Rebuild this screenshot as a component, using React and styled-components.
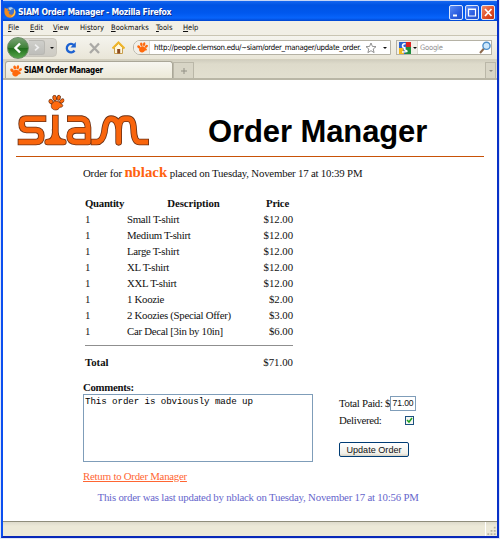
import React from "react";
import styled, { createGlobalStyle } from "styled-components";

const Global = createGlobalStyle`
  * { box-sizing: border-box; }
  body { margin: 0; background: #dfe6f8; overflow: hidden; }
`;

const Frame = styled.div`
  width: 498px; height: 538px; margin: 0 0 0 1px; display: flex; flex-direction: column;
  background: #ece9d8; overflow: hidden;
  border-style: solid; border-width: 0 2px 2px 2px;
  border-color: #0b41e0 #0831c8 #0828b8 #0b4ff0;
  font-family: "DejaVu Sans Condensed", "DejaVu Sans", sans-serif;
  white-space: nowrap;
`;
const TitleBar = styled.header`
  height: 21px; flex: none; display: flex; align-items: center; gap: 1px;
  margin: 0 -2px; padding: 3px 4px 0 3px;
  background: linear-gradient(#c5d5f5 0 1px, #1667f0 1px, #0053e3 5px, #0058ee 13px, #0864fb 18px, #0045cf 21px);
`;
const Title = styled.div`
  flex: 1; margin-left: 1px; color: #fff; font: bold 8.6px/13px "DejaVu Sans Condensed", "DejaVu Sans", sans-serif;
  letter-spacing: ${(p) => p.$track}px; text-shadow: 1px 1px #0a2c8c;
`;
const WinButton = styled.span`
  width: 14px; height: 15px; border: 1px solid #dbe6fb; border-radius: 2px; display: flex; margin-left: 1px;
  background: ${(p) => (p.$close ? "linear-gradient(135deg,#ef8c6c,#df4a22 60%,#c5330f)" : "linear-gradient(135deg,#5c8df5,#2a5ce0 60%,#2050ca)")};
  svg { width: 12px; height: 13px; }
`;
const MenuBar = styled.nav`
  height: 15px; flex: none; display: flex; align-items: center; padding-left: 5px;
  background: #f1efe6; border-bottom: 1px solid #c9c5b3;
`;
const MenuItem = styled.span`
  width: ${(p) => p.$w}px; font-size: 7.5px; line-height: 12px; color: #111;
`;
const Key = styled.u` text-decoration-thickness: 1px; `;
const Toolbar = styled.div`
  height: 24px; flex: none; display: flex; align-items: center;
  background: linear-gradient(#f5f4ee, #e9e6d8); border-bottom: 1px solid #d4d0bf;
`;
const NavGroup = styled.div`
  width: 50px; height: 19px; margin-left: 4px; border-radius: 9px 4px 4px 9px; display: flex; align-items: center;
  background: linear-gradient(#d9d7d1, #cdcbc3); border: 1px solid #c9c6bc; flex: none;
`;
const Back = styled.span`
  width: 22px; height: 22px; border-radius: 50%; margin-left: -1px; flex: none; display: flex;
  border: 1px solid #6b8c67; background: linear-gradient(#78a273, #3f8238 48%, #216f1d 52%, #55a548);
`;
const Forward = styled.span`
  width: 16px; height: 15px; border: 1px solid #b9b8b3; border-left: 0; border-radius: 0 3px 3px 0; display: flex;
  background: linear-gradient(#cfcfcb, #bebeba);
`;
const Caret = styled.i`
  border: solid transparent; border-width: 2px 2px 0; border-top-color: ${(p) => p.$c || "#111"};
  margin: ${(p) => p.$m || "0"}; flex: none;
`;
const ToolIcon = styled.span`
  width: 13px; height: 14px; margin-left: ${(p) => p.$gap}px; display: flex; flex: none;
  svg { width: 13px; height: 14px; }
`;
const Field = styled.div`
  height: 15px; width: ${(p) => p.$w}px; margin-left: ${(p) => p.$gap}px; flex: none; display: flex; align-items: center;
  background: #fff; border: 1px solid #b5b2a5; border-radius: ${(p) => p.$round || "0"}; overflow: hidden;
`;
const SiteIcon = styled.span`
  width: 16px; height: 13px; display: flex; align-items: center; justify-content: flex-end; padding-right: 1px; flex: none;
  background: #f1efe8; border-right: 1px solid #dcd9d0; svg { width: 11px; height: 11px; }
`;
const Url = styled.span`
  width: 211px; margin-left: 4px; font-size: 7.8px; line-height: 13px; letter-spacing: ${(p) => p.$track}px; color: #000; flex: none;
`;
const Engine = styled.span`
  width: 21px; height: 13px; background: #f1efe8; border-right: 1px solid #dcd9d0; display: flex; align-items: center; padding-left: 2px; gap: 2px;
  flex: none; svg { width: 12px; height: 12px; }
`;
const Hint = styled.span`
  flex: 1; padding-left: 2px; font-size: 7.5px; letter-spacing: -0.2px; color: #8f8f8f;
`;
const TabBar = styled.div`
  height: 20px; flex: none; display: flex; align-items: flex-end; padding: 0 1px 0 2px;
  background: linear-gradient(#d1cebf, #dedbcb 4px, #e2dfd0); border-bottom: 2px solid #b9b6a6;
`;
const Tab = styled.div`
  width: 168px; height: 17px; display: flex; align-items: center; gap: 2px; padding: 1px 0 0 4px;
  background: linear-gradient(#f7f6f0, #ece9d8); border: 1px solid #aaa798; border-bottom: 0; border-radius: 3px 3px 0 0;
  font: bold 8px/12px "DejaVu Sans Condensed", "DejaVu Sans", sans-serif; letter-spacing: ${(p) => p.$track}px;
  svg { width: 12px; height: 12px; }
`;
const SmallTab = styled.div`
  width: ${(p) => p.$w}px; height: 16px; display: flex; align-items: center; justify-content: center;
  margin-left: ${(p) => p.$ml}; border: 1px solid #bab7a8; border-bottom: 0; background: #d8d5c6;
  svg { width: 6px; height: 6px; }
`;
const Page = styled.main`
  height: 441px; flex: none; background: #fff; padding: 14px 8px 0 13px;
  font-family: "Liberation Serif", serif; font-size: 10.8px; line-height: 16px; color: #111;
`;
const Banner = styled.div`
  height: 63px; display: flex; border-bottom: 1px solid #c85208; width: 468px;
`;
const Logo = styled.svg` width: 134px; height: 53px; flex: none; `;
const Heading = styled.h1`
  margin: 20px 0 0 58px; font: bold 31px/36px "Liberation Sans", sans-serif; color: #000; letter-spacing: -0.1px;
`;
const Body = styled.div` margin-left: 67px; `;
const OrderLine = styled.p`
  margin: 5px 0 0; height: 20px; line-height: 20px; letter-spacing: ${(p) => p.$track}px;
  b { color: #ff6210; font-size: 14.8px; letter-spacing: 0; }
`;
const Items = styled.div`
  margin-top: 13px; width: 210px; padding-left: 2px; padding-bottom: 6px;
`;
const Row = styled.div`
  display: grid; grid-template-columns: 42px 1fr 41px; height: 16px; line-height: 16px;
  & > :last-child { text-align: right; letter-spacing: -0.05px; }
`;
const HeadRow = styled(Row)`
  font-weight: bold;
  & > :first-child { letter-spacing: -0.3px; }
  & > :nth-child(2) { text-align: center; letter-spacing: -0.1px; padding: 0 1px 0 9px; }
  & > :last-child { padding-right: 4px; letter-spacing: -0.2px; }
`;
const Desc = styled.span` letter-spacing: ${(p) => p.$track}px; `;
const TotalRow = styled.div`
  margin-left: 2px; width: 208px; border-top: 1px solid #8f8f8f; display: flex; justify-content: space-between; padding-top: 8px; height: 34px;
`;
const Label = styled.div` font-weight: bold; height: 14px; margin-top: 1px; line-height: 14px; letter-spacing: ${(p) => p.$track || 0}px; `;
const FormRow = styled.div` display: flex; height: 68px; `;
const Comments = styled.div`
  width: 230px; height: 68px; border: 1px solid #7f9db9; padding: 1px 1px; color: #000;
  font: 9.2px/12px "Liberation Mono", monospace; letter-spacing: ${(p) => p.$track}px;
`;
const Side = styled.div` margin-left: 26px; width: 77px; padding-top: 1px; `;
const SideRow = styled.div`
  display: flex; align-items: center; justify-content: space-between; height: ${(p) => p.$h}px; letter-spacing: ${(p) => p.$track || 0}px;
  padding-right: ${(p) => p.$pr || 0}px;
`;
const Amount = styled.span`
  width: 26px; height: 15px; border: 1px solid #7f9db9; font: 8.6px/13px "Liberation Sans", sans-serif; text-align: center; letter-spacing: -0.1px;
`;
const Check = styled.span`
  width: 9px; height: 9px; border: 1px solid #1c5180; display: flex; background: #f6f6f2; svg { width: 7px; height: 7px; }
`;
const Button = styled.button`
  display: block; margin: 13px 0 0; width: 70px; height: 15px; padding: 0; border: 1px solid #003c74; border-radius: 2px;
  background: linear-gradient(#fff, #f1f0ea 80%, #d8d2c4); font: 9.1px/12px "Liberation Sans", sans-serif; color: #111;
`;
const Return = styled.a`
  display: block; margin-top: 6px; height: 16px; color: #ff6633; text-decoration: underline; letter-spacing: ${(p) => p.$track}px;
`;
const Updated = styled.p`
  margin: 5px 0 0 14.5px; color: #6666cc; letter-spacing: ${(p) => p.$track}px;
`;
const Status = styled.footer`
  flex: 1; border-top: 1px solid #8f8d7c; background: linear-gradient(#dedbcc, #ece9d8 4px); display: flex; justify-content: flex-end;
  svg { width: 12px; height: 14px; border-left: 1px solid #fff; }
`;

const Paw = ({ outline, ...rest }) => (
  <svg viewBox="0 0 24 24" {...rest}>
    <g fill="#ff6a0d" stroke={outline ? "#542008" : "none"} strokeWidth="1">
      <ellipse cx="4" cy="10.5" rx="3" ry="3.8" transform="rotate(-40 4 10.5)" />
      <ellipse cx="9.5" cy="5" rx="2.8" ry="4.2" transform="rotate(-12 9.5 5)" />
      <ellipse cx="15.5" cy="4.6" rx="2.6" ry="4" transform="rotate(15 15.5 4.6)" />
      <ellipse cx="20.4" cy="9.5" rx="2.7" ry="4" transform="rotate(48 20.4 9.5)" />
      <path d="M12 9.5c4 0 4.500 3 8 4.600 3 1.500 1.500 5-1.500 4.600-2-.2-2.500 3.800-6.500 4.300-4.500.5-8-2.500-7.500-7 .4-3.500 4-6.500 7.500-6.500Z" />
    </g>
  </svg>
);

const FoxIcon = () => (
  <svg width="12" height="12" viewBox="0 0 16 16">
    <circle cx="8.500" cy="7.500" r="6.500" fill="#3f73cf" />
    <path d="M6 2.500q4-2 6 1-3 0-3 2-2 0-3-3" fill="#a8d0f4" />
    <path d="M1 2q1 1.500 3 1.500 1 0 2 .5L4.500 6.500q2 0 3.500 1L6 9q1 3 4.500 2.500Q14 10 13.500 5 15 6 15.500 8.500A7.500 7.500 0 0 1 .5 8Q.4 4 1 2Z" fill="#f28a1e" />
    <path d="M13 3q2.500 3 2 6-1 5-6.500 6 5-3 5-7 0-3-.5-5Z" fill="#ffd257" />
  </svg>
);

const letters = [
  "M129 115 H77 Q65 115 65 130 Q65 148 80 149 H108 Q124 150 124 166 Q124 185 108 185 H63",
  "M166 113 V156 Q164 185 143 185 H190 Q168 185 166 156",
  "M211 115 H245 Q263 117 264 142 V185 H228 Q209 184 209 168 Q209 151 228 150 H262",
  "M282 185 H290 Q307 185 313 156 Q317 115 333 115 Q354 115 356 148 V186 V148 Q357 115 374 115 H384 Q400 115 401 148 Q402 185 418 185 H437",
];

const items = [
  ["Small T-shirt", "$12.00"], ["Medium T-shirt", "$12.00"], ["Large T-shirt", "$12.00"], ["XL T-shirt", "$12.00"],
  ["XXL T-shirt", "$12.00"], ["1 Koozie", "$2.00"], ["2 Koozies (Special Offer)", "$3.00"], ["Car Decal [3in by 10in]", "$6.00"],
];
// label, slot width, index of the access key
const menus = [["File", 22, 0], ["Edit", 23, 0], ["View", 27, 0], ["History", 31, 2], ["Bookmarks", 45, 0], ["Tools", 27, 0], ["Help", 20, 0]];

export default function App() {
  return (
    <Frame>
      <Global />
      <TitleBar>
        <FoxIcon />
        <Title $track={-0.28}>SIAM Order Manager - Mozilla Firefox</Title>
        <WinButton><svg viewBox="0 0 12 13"><path d="M3 9.500h4" stroke="#fff" strokeWidth="2" /></svg></WinButton>
        <WinButton><svg viewBox="0 0 12 13"><path d="M2.500 3v7h7V3Z M2 3.500h8" stroke="#fff" strokeWidth="1.200" fill="none" /></svg></WinButton>
        <WinButton $close><svg viewBox="0 0 12 13"><path d="M3 3l6.500 7M9.500 3L3 10" stroke="#fff" strokeWidth="1.700" /></svg></WinButton>
      </TitleBar>
      <MenuBar>
        {menus.map(([m, w, k]) => (
          <MenuItem key={m} $w={w}>{m.slice(0, k)}<Key>{m[k]}</Key>{m.slice(k + 1)}</MenuItem>
        ))}
      </MenuBar>
      <Toolbar>
        <NavGroup>
          <Back><svg viewBox="0 0 20 20"><path d="M12 5.500L7.500 10l4.500 4.500" fill="none" stroke="#fff" strokeWidth="2.400" /></svg></Back>
          <Forward><svg viewBox="0 0 16 14"><path d="M6.500 4l3.500 3-3.500 3" fill="none" stroke="#eee" strokeWidth="1.800" /></svg></Forward>
          <Caret $m="0 0 0 5px" />
        </NavGroup>
        <ToolIcon $gap={7}><svg viewBox="0 0 13 14"><path d="M10 4.200A4.200 4.200 0 1 0 10.500 9.500" fill="none" stroke="#1d62d1" strokeWidth="2.300" /><path d="M11.800 1v5.500H6.500Z" fill="#1d62d1" /></svg></ToolIcon>
        <ToolIcon $gap={11}><svg viewBox="0 0 13 14"><path d="M2 2.500l9 9.500M11 2.500L2 12" stroke="#aaa9a5" strokeWidth="2.300" /></svg></ToolIcon>
        <ToolIcon $gap={11}><svg viewBox="0 0 13 14"><path d="M2.500 6.500v6h8v-6l-4-4Z" fill="#fff8dc" stroke="#c8a050" /><path d="M.5 7.500l6-6 6 6" fill="none" stroke="#eeb52a" strokeWidth="2" /><path d="M5.200 8h3v4.500h-3Z" fill="#8d4a20" /></svg></ToolIcon>
        <Field $w={258} $gap={8} $round="7px 0 0 7px">
          <SiteIcon><Paw /></SiteIcon>
          <Url $track={-0.29}>http://people.clemson.edu/~siam/order_manager/update_order.</Url>
          <svg width="12" height="12" viewBox="0 0 12 12"><path d="M6 1l1.400 3.400 3.600.3-2.800 2.300.9 3.600L6 8.700l-3.100 1.900.9-3.600L1 4.700l3.600-.3Z" fill="#fff" stroke="#777" strokeWidth=".8" /></svg>
          <Caret $m="0 0 0 6px" />
        </Field>
        <Field $w={96} $gap={5}>
          <Engine>
            <svg viewBox="0 0 12 12"><path d="M0 0h7v12H0Z" fill="#2b62cf" /><path d="M7 0h5v5H7Z" fill="#dc2222" /><path d="M7 5h5v7H6Z" fill="#1e8c3c" /><path d="M0 6h4l1 6H0Z" fill="#f2b91c" /><path d="M6.500 2a2 2 0 1 0 0 3.500Q4 7 7 8.500T3 10" fill="none" stroke="#fff" strokeWidth="1.600" /></svg>
            <Caret />
          </Engine>
          <Hint>Google</Hint>
          <svg width="12" height="13" viewBox="0 0 12 13"><path d="M1 12l4-4.500" stroke="#8e6a4c" strokeWidth="2" /><circle cx="7.500" cy="4.800" r="3.600" fill="#cfe8fb" stroke="#4e8fca" strokeWidth="1.400" /></svg>
        </Field>
      </Toolbar>
      <TabBar>
        <Tab $track={-0.32}><Paw />SIAM Order Manager</Tab>
        <SmallTab $w={21} $ml="0"><svg viewBox="0 0 6 6"><path d="M0 3h6M3 0v6" stroke="#929085" /></svg></SmallTab>
        <SmallTab $w={11} $ml="auto"><Caret $c="#8c8a80" /></SmallTab>
      </TabBar>
      <Page>
        <Banner>
          <Logo viewBox="48 41 402 159">
            <g fill="none" strokeLinejoin="round" strokeLinecap="square">
              {letters.map((d) => <path key={d} d={d} stroke="#6b3217" strokeWidth="20" />)}
              {letters.map((d) => <path key={d} d={d} stroke="#f9650c" strokeWidth="15" />)}
            </g>
            <Paw x="145" y="43" width="48" height="48" outline="1" />
          </Logo>
          <Heading>Order Manager</Heading>
        </Banner>
        <Body>
          <OrderLine $track={-0.18}>Order for <b>nblack</b> placed on Tuesday, November 17 at 10:39 PM</OrderLine>
          <Items>
            <HeadRow><span>Quantity</span><span>Description</span><span>Price</span></HeadRow>
            {items.map(([n, p]) => <Row key={n}><span>1</span><Desc $track={-0.29}>{n}</Desc><span>{p}</span></Row>)}
          </Items>
          <TotalRow><b>Total</b><span>$71.00</span></TotalRow>
          <Label $track={-0.3}>Comments:</Label>
          <FormRow>
            <Comments $track={-0.1}>This order is obviously made up</Comments>
            <Side>
              <SideRow $h={16} $track={-0.3}><span>Total Paid: $</span><Amount>71.00</Amount></SideRow>
              <SideRow $h={18} $pr={2} $track={-0.3}><span>Delivered:</span><Check><svg viewBox="0 0 7 7"><path d="M1 3l2 2 3-4" fill="none" stroke="#21a121" strokeWidth="1.500" /></svg></Check></SideRow>
              <Button>Update Order</Button>
            </Side>
          </FormRow>
          <Return $track={-0.24}>Return to Order Manager</Return>
          <Updated $track={-0.2}>This order was last updated by nblack on Tuesday, November 17 at 10:56 PM</Updated>
        </Body>
      </Page>
      <Status><svg viewBox="0 0 12 13"><path d="M8.500 4h2v2h-2ZM8.500 7.500h2v2h-2ZM5 7.500h2v2H5ZM8.500 11h2v2h-2ZM5 11h2v2H5ZM1.500 11h2v2h-2Z" fill="#b8b4a2" /></svg></Status>
    </Frame>
  );
}
